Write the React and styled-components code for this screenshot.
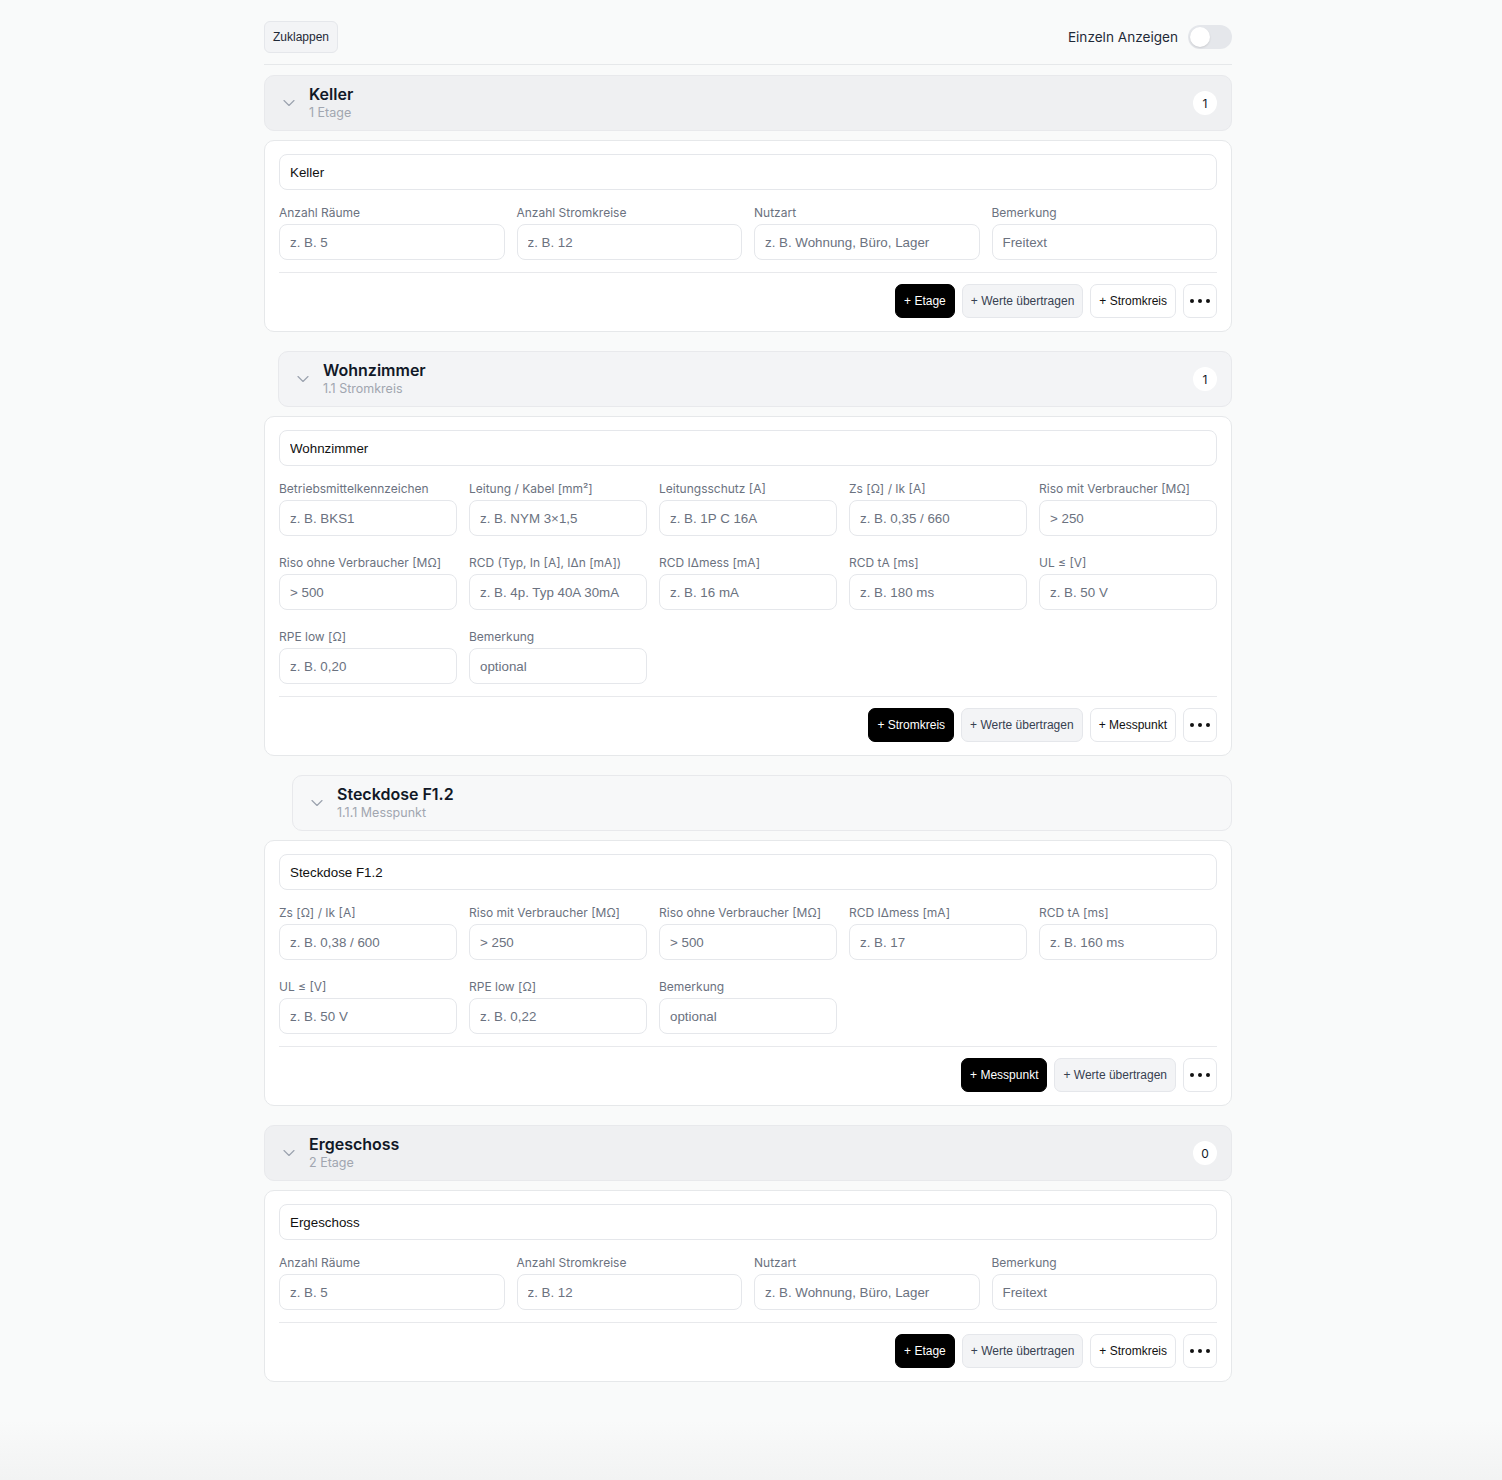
import React, { useState } from "react";
import styled, { createGlobalStyle } from "styled-components";
import { ChevronDown } from "lucide-react";

const GlobalStyle = createGlobalStyle`
  html, body {
    margin: 0;
    padding: 0;
    background: #f9fafa;
    font-family: Inter, "Noto Sans", sans-serif;
    color: #111827;
  }
`;

const etageFields = [
  { label: "Anzahl Räume", ph: "z. B. 5" },
  { label: "Anzahl Stromkreise", ph: "z. B. 12" },
  { label: "Nutzart", ph: "z. B. Wohnung, Büro, Lager" },
  { label: "Bemerkung", ph: "Freitext" },
];

const stromkreisFields = [
  { label: "Betriebsmittelkennzeichen", ph: "z. B. BKS1" },
  { label: "Leitung / Kabel [mm²]", ph: "z. B. NYM 3×1,5" },
  { label: "Leitungsschutz [A]", ph: "z. B. 1P C 16A" },
  { label: "Zs [Ω] / Ik [A]", ph: "z. B. 0,35 / 660" },
  { label: "Riso mit Verbraucher [MΩ]", ph: "> 250" },
  { label: "Riso ohne Verbraucher [MΩ]", ph: "> 500" },
  { label: "RCD (Typ, In [A], IΔn [mA])", ph: "z. B. 4p. Typ 40A 30mA" },
  { label: "RCD IΔmess [mA]", ph: "z. B. 16 mA" },
  { label: "RCD tA [ms]", ph: "z. B. 180 ms" },
  { label: "UL ≤ [V]", ph: "z. B. 50 V" },
  { label: "RPE low [Ω]", ph: "z. B. 0,20" },
  { label: "Bemerkung", ph: "optional" },
];

const messpunktFields = [
  { label: "Zs [Ω] / Ik [A]", ph: "z. B. 0,38 / 600" },
  { label: "Riso mit Verbraucher [MΩ]", ph: "> 250" },
  { label: "Riso ohne Verbraucher [MΩ]", ph: "> 500" },
  { label: "RCD IΔmess [mA]", ph: "z. B. 17" },
  { label: "RCD tA [ms]", ph: "z. B. 160 ms" },
  { label: "UL ≤ [V]", ph: "z. B. 50 V" },
  { label: "RPE low [Ω]", ph: "z. B. 0,22" },
  { label: "Bemerkung", ph: "optional" },
];

const sections = [
  {
    title: "Keller",
    sub: "1 Etage",
    level: 0,
    count: 1,
    cols: 4,
    fields: etageFields,
    actions: ["+ Etage", "+ Werte übertragen", "+ Stromkreis"],
  },
  {
    title: "Wohnzimmer",
    sub: "1.1 Stromkreis",
    level: 1,
    count: 1,
    cols: 5,
    fields: stromkreisFields,
    actions: ["+ Stromkreis", "+ Werte übertragen", "+ Messpunkt"],
  },
  {
    title: "Steckdose F1.2",
    sub: "1.1.1 Messpunkt",
    level: 2,
    cols: 5,
    fields: messpunktFields,
    actions: ["+ Messpunkt", "+ Werte übertragen"],
  },
  {
    title: "Ergeschoss",
    sub: "2 Etage",
    level: 0,
    count: 0,
    cols: 4,
    fields: etageFields,
    actions: ["+ Etage", "+ Werte übertragen", "+ Stromkreis"],
  },
];

const headerBg = ["#eff0f2", "#f3f4f6", "#f7f8f9"];

const Page = styled.div`
  min-height: 100vh;
  background: linear-gradient(to bottom, #f9fafa calc(100% - 60px), #f2f3f3 100%);
`;

const Wrap = styled.div`
  width: 968px;
  margin-left: 264px;
  padding: 21px 0 40px;
`;

const TopBar = styled.div`
  display: flex;
  align-items: center;
  justify-content: space-between;
  padding-bottom: 11px;
  border-bottom: 1px solid #e6e8ea;
`;

const GhostButton = styled.button`
  height: 32px;
  padding: 0 8px;
  font-family: "Liberation Sans", Arial, sans-serif;
  font-size: 12px;
  color: #1f2937;
  background: #f3f4f6;
  border: 1px solid #e5e7eb;
  border-radius: 6px;
`;

const ToggleRow = styled.label`
  display: flex;
  align-items: center;
  gap: 10px;
  font-size: 13.6px;
  color: #1f2937;
`;

const Toggle = styled.span`
  width: 44px;
  height: 24px;
  border-radius: 12px;
  background: #e5e7eb;
  display: flex;
  align-items: center;
  padding: 2px;
  box-sizing: border-box;

  &::after {
    content: "";
    width: 20px;
    height: 20px;
    border-radius: 50%;
    background: #fff;
    box-shadow: 0 1px 2px rgba(0, 0, 0, 0.12);
  }
`;

const List = styled.div`
  display: flex;
  flex-direction: column;
  gap: 19px;
  margin-top: 10px;
`;

const Section = styled.section`
  display: flex;
  flex-direction: column;
  gap: 9px;
`;

const Header = styled.div`
  margin-left: ${(p) => p.$level * 14}px;
  height: 56px;
  box-sizing: border-box;
  display: flex;
  align-items: center;
  gap: 10px;
  padding: 0 14px;
  background: ${(p) => headerBg[p.$level]};
  border: 1px solid #e8e9ec;
  border-radius: 10px;
  color: #9ca3af;
`;

const HeaderText = styled.div`
  flex: 1;
  display: flex;
  flex-direction: column;
`;

const Title = styled.div`
  font-size: 16px;
  line-height: 19px;
  font-weight: 600;
  color: #111827;
`;

const Sub = styled.div`
  font-size: 12.5px;
  line-height: 16px;
  margin-top: 1px;
  color: #a1a6b0;
`;

const Badge = styled.span`
  width: 24px;
  height: 24px;
  border-radius: 50%;
  background: #fff;
  display: flex;
  align-items: center;
  justify-content: center;
  font-size: 12px;
  color: #111827;
`;

const Card = styled.div`
  background: #fff;
  border: 1px solid #e6e8ea;
  border-radius: 10px;
  padding: 13px 14px;
`;

const Input = styled.input`
  width: 100%;
  height: 36px;
  box-sizing: border-box;
  padding: 0 10px;
  border: 1px solid #e5e7eb;
  border-radius: 8px;
  background: #fff;
  font-family: "Liberation Sans", Arial, sans-serif;
  font-size: 13.333px;
  color: #111;
  outline: none;

  &::placeholder {
    color: #6b7280;
  }
`;

const Grid = styled.div`
  display: grid;
  grid-template-columns: repeat(${(p) => p.$cols}, 1fr);
  gap: 18px 12px;
  margin-top: 14px;
`;

const Field = styled.div`
  display: flex;
  flex-direction: column;
  gap: 2px;
  min-width: 0;
`;

const Label = styled.label`
  font-size: 12px;
  line-height: 18px;
  color: #6b7280;
  white-space: nowrap;
`;

const Footer = styled.div`
  display: flex;
  justify-content: flex-end;
  gap: 7px;
  margin-top: 12px;
  padding-top: 11px;
  border-top: 1px solid #e8e9ec;
`;

const ActionButton = styled.button`
  height: 34px;
  padding: 0 8px;
  font-family: "Liberation Sans", Arial, sans-serif;
  font-size: 12px;
  border-radius: 7px;
  border: 1px solid ${(p) => (p.$variant === "primary" ? "#000" : "#e5e7eb")};
  background: ${(p) =>
    p.$variant === "primary" ? "#000" : p.$variant === "muted" ? "#f3f4f6" : "#fff"};
  color: ${(p) => (p.$variant === "primary" ? "#fff" : p.$variant === "muted" ? "#374151" : "#111")};
`;

const MoreButton = styled(ActionButton)`
  width: 34px;
  padding: 0;
  display: flex;
  align-items: center;
  justify-content: center;
`;

const Dots = () => (
  <svg width="20" height="6" viewBox="0 0 20 6">
    <circle cx="2" cy="3" r="2" fill="#111" />
    <circle cx="10" cy="3" r="2" fill="#111" />
    <circle cx="18" cy="3" r="2" fill="#111" />
  </svg>
);

const variantFor = (i) => (i === 0 ? "primary" : i === 1 ? "muted" : "plain");

const Block = ({ s }) => (
  <Section>
    <Header $level={s.level}>
      <ChevronDown size={20} strokeWidth={1.4} />
      <HeaderText>
        <Title>{s.title}</Title>
        <Sub>{s.sub}</Sub>
      </HeaderText>
      {s.count !== undefined && <Badge>{s.count}</Badge>}
    </Header>
    <Card>
      <Input defaultValue={s.title} />
      <Grid $cols={s.cols}>
        {s.fields.map((f, i) => (
          <Field key={i}>
            <Label>{f.label}</Label>
            <Input placeholder={f.ph} />
          </Field>
        ))}
      </Grid>
      <Footer>
        {s.actions.map((a, i) => (
          <ActionButton key={a} $variant={variantFor(i)}>
            {a}
          </ActionButton>
        ))}
        <MoreButton $variant="plain">
          <Dots />
        </MoreButton>
      </Footer>
    </Card>
  </Section>
);

const App = () => {
  const [single] = useState(false);
  return (
    <Page>
      <GlobalStyle />
      <Wrap>
        <TopBar>
          <GhostButton>Zuklappen</GhostButton>
          <ToggleRow>
            Einzeln Anzeigen
            <Toggle data-on={single} />
          </ToggleRow>
        </TopBar>
        <List>
          {sections.map((s) => (
            <Block key={s.title} s={s} />
          ))}
        </List>
      </Wrap>
    </Page>
  );
};

export default App;
